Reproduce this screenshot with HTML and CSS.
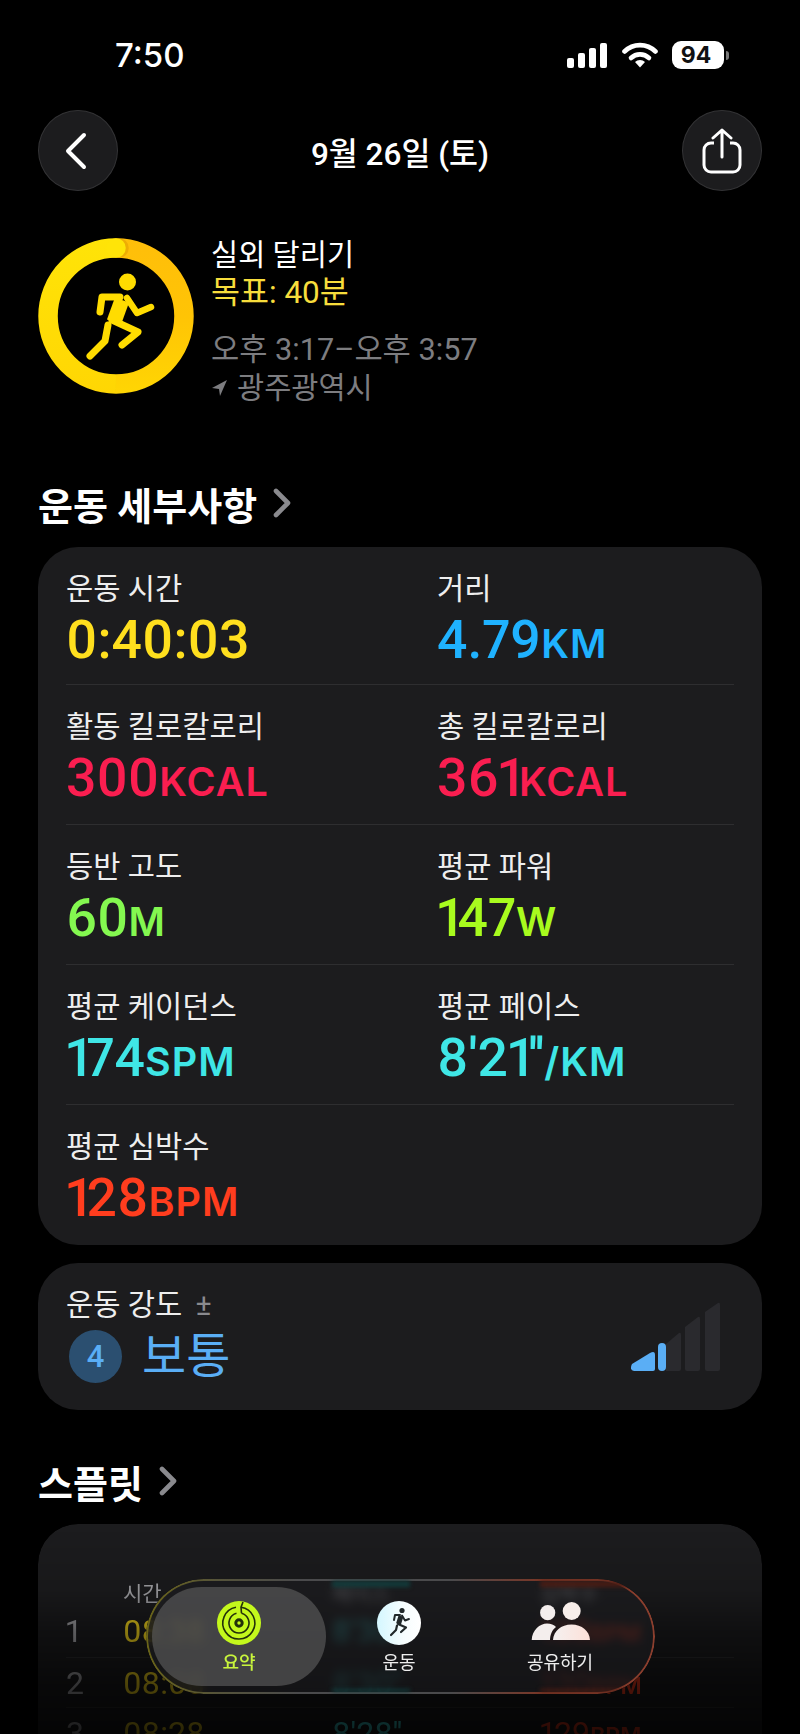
FILE: index.html
```html
<!DOCTYPE html>
<html lang="ko">
<head>
    <meta charset="UTF-8">
    <meta name="viewport" content="width=device-width, initial-scale=1.0">
    <title>운동 요약</title>
    <link rel="stylesheet" href="styles.css">
</head>
<body>
<div class="page">
    <div class="status-bar">
        <span class="clock">7:50</span>
        <div class="status-icons">
            <svg class="signal" width="40" height="25" viewBox="0 0 40 25">
                <rect x="0" y="15" width="7" height="10" rx="2"/>
                <rect x="11" y="10" width="7" height="15" rx="2"/>
                <rect x="22" y="5" width="7" height="20" rx="2"/>
                <rect x="33" y="0" width="7" height="25" rx="2"/>
            </svg>
            <svg class="wifi" width="36" height="26" viewBox="0 0 36 26">
                <path d="M2.5 9.5 A22 22 0 0 1 33.5 9.5" fill="none" stroke="#fff" stroke-width="4.6" stroke-linecap="round"/>
                <path d="M9 16 A13 13 0 0 1 27 16" fill="none" stroke="#fff" stroke-width="4.6" stroke-linecap="round"/>
                <path d="M13 20 A7 7 0 0 1 23 20 L18 25.5 Z" fill="#fff"/>
            </svg>
            <div class="battery"><span>94</span></div>
            <div class="battery-nub"></div>
        </div>
    </div>

    <div class="nav">
        <button class="round-btn">
            <svg class="back-icon" width="24" height="38" viewBox="0 0 24 38"><path d="M20 3 L4 19 L20 35" fill="none" stroke="#fff" stroke-width="4" stroke-linecap="round" stroke-linejoin="round"/></svg>
        </button>
        <h1 class="nav-title">9월 26일 (토)</h1>
        <button class="round-btn">
            <svg width="40" height="46" viewBox="0 0 40 46">
                <path d="M12 15 H9 A7 7 0 0 0 2 22 V37 A7 7 0 0 0 9 44 H31 A7 7 0 0 0 38 37 V22 A7 7 0 0 0 31 15 H28" fill="none" stroke="#fff" stroke-width="3"/>
                <path d="M20 29 V2 M11 10 L20 2 L29 10" fill="none" stroke="#fff" stroke-width="3" stroke-linecap="round" stroke-linejoin="round"/>
            </svg>
        </button>
    </div>

    <div class="hero">
        <svg class="ring" width="160" height="160" viewBox="0 0 160 160">
            <defs>
                <linearGradient id="ringRight" gradientUnits="userSpaceOnUse" x1="80" y1="0" x2="80" y2="160">
                    <stop offset="0" stop-color="#ffbe0a"/>
                    <stop offset="0.5" stop-color="#ffc405"/>
                    <stop offset="1" stop-color="#ffd603"/>
                </linearGradient>
                <linearGradient id="ringLeft" gradientUnits="userSpaceOnUse" x1="80" y1="0" x2="80" y2="160">
                    <stop offset="0" stop-color="#ffe408"/>
                    <stop offset="1" stop-color="#ffd603"/>
                </linearGradient>
            </defs>
            <path d="M80 12 A68 68 0 0 1 80 148" fill="none" stroke="url(#ringRight)" stroke-width="19.5"/>
            <path d="M80 148 A68 68 0 0 1 80 12" fill="none" stroke="url(#ringLeft)" stroke-width="19.5"/>
            <circle cx="83" cy="12" r="9.75" fill="#dd9c00" opacity="0.5"/>
            <circle cx="80" cy="12" r="9.75" fill="#ffe408"/>
            <g fill="none" stroke="#ffdc00" stroke-linecap="round" stroke-linejoin="round">
                <circle cx="91.5" cy="46" r="8.5" fill="#ffdc00" stroke="none"/>
                <path d="M86 64 L78 86" stroke-width="15" stroke-linecap="butt"/>
                <path d="M84 61 H66 L64 76" stroke-width="7"/>
                <path d="M91 62 L101 77 L115 71" stroke-width="6.5"/>
                <path d="M72 89 L69 105 L54 120" stroke-width="7"/>
                <path d="M76 84 L102 96 L86 109" stroke-width="7"/>
            </g>
        </svg>
        <div class="hero-text">
            <div class="hero-name">실외 달리기</div>
            <div class="hero-goal">목표: 40분</div>
            <div class="hero-time">오후 3:17–오후 3:57</div>
            <div class="hero-place">
                <svg width="15" height="16" viewBox="0 0 15 16"><path d="M15 0 L0 8 L7 9 L8 16 Z" fill="#7d7d80"/></svg>
                광주광역시
            </div>
        </div>
    </div>

    <h2 class="section-title first">운동 세부사항
        <svg width="18" height="30" viewBox="0 0 18 30"><path d="M3 3 L15 15 L3 27" fill="none" stroke="#8a8a8e" stroke-width="4.6" stroke-linecap="round" stroke-linejoin="round"/></svg>
    </h2>
    <div class="card stats">
        <div class="stat-row">
            <div class="stat"><div class="stat-label">운동 시간</div><div class="stat-value yellow">0:40:03</div></div>
            <div class="stat"><div class="stat-label">거리</div><div class="stat-value blue">4.79<small>KM</small></div></div>
        </div>
        <div class="stat-row">
            <div class="stat"><div class="stat-label">활동 킬로칼로리</div><div class="stat-value pink">300<small>KCAL</small></div></div>
            <div class="stat"><div class="stat-label">총 킬로칼로리</div><div class="stat-value pink">36<span class="one">1</span><small>KCAL</small></div></div>
        </div>
        <div class="stat-row">
            <div class="stat"><div class="stat-label">등반 고도</div><div class="stat-value green">60<small>M</small></div></div>
            <div class="stat"><div class="stat-label">평균 파워</div><div class="stat-value lime"><span class="one">1</span>47<small>W</small></div></div>
        </div>
        <div class="stat-row">
            <div class="stat"><div class="stat-label">평균 케이던스</div><div class="stat-value cyan"><span class="one">1</span>74<small>SPM</small></div></div>
            <div class="stat"><div class="stat-label">평균 페이스</div><div class="stat-value cyan">8'2<span class="one">1</span>''<small>/KM</small></div></div>
        </div>
        <div class="stat-row">
            <div class="stat"><div class="stat-label">평균 심박수</div><div class="stat-value red"><span class="one">1</span>28<small>BPM</small></div></div>
        </div>
    </div>

    <div class="card effort">
        <div>
            <div class="stat-label">운동 강도 <span class="plus-minus">±</span></div>
            <div class="effort-level">
                <span class="effort-badge">4</span>
                <span class="effort-name">보통</span>
            </div>
        </div>
        <svg class="effort-bars" width="90" height="70" viewBox="0 0 90 70">
            <path d="M74 10 L87 1 Q89 0 89 3 V67 Q89 69 87 69 H76 Q74 69 74 67 Z" fill="#2a2a2e"/>
            <path d="M54 25 L67 15 Q69 14 69 17 V67 Q69 69 67 69 H56 Q54 69 54 67 Z" fill="#2a2a2e"/>
            <path d="M35 42 L48 31 Q50 30 50 33 V67 Q50 69 48 69 H35 Z" fill="#2a2a2e"/>
            <rect x="27" y="41" width="8" height="28" rx="4" fill="#5aaef5"/>
            <path d="M1 62 L19 51 Q24 48 24 53 V67 Q24 69 22 69 H3 Q-2 68 1 62 Z" fill="#5aaef5"/>
        </svg>
    </div>

    <h2 class="section-title">스플릿
        <svg width="18" height="30" viewBox="0 0 18 30"><path d="M3 3 L15 15 L3 27" fill="none" stroke="#8a8a8e" stroke-width="4.6" stroke-linecap="round" stroke-linejoin="round"/></svg>
    </h2>
    <div class="card splits">
        <div class="split-row split-head">
            <span></span><span>시간</span><span>페이스</span><span>심박수</span>
        </div>
        <div class="split-row">
            <span class="split-num">1</span><span class="yellow">08:38</span><span class="cyan">8'30''</span><span class="red">133<small>BPM</small></span>
        </div>
        <div class="split-row">
            <span class="split-num">2</span><span class="yellow">08:08</span><span class="cyan">8'30''</span><span class="red">130<small>BPM</small></span>
        </div>
        <div class="split-row">
            <span class="split-num">3</span><span class="yellow">08:28</span><span class="cyan">8'28''</span><span class="red">129<small>BPM</small></span>
        </div>
    </div>

    <div class="tab-bar">
        <div class="glint glint-teal"></div>
        <div class="glint glint-red"></div>
        <div class="tab active">
            <svg width="44" height="44" viewBox="0 0 44 44">
                <circle cx="22" cy="22" r="22" fill="#c4f81c"/>
                <g fill="none" stroke="#23300a" stroke-width="1.6">
                    <path d="M24 6.2 A16 16 0 1 1 19 6.3"/>
                    <path d="M24.5 12.3 A10 10 0 1 1 19.5 12.3"/>
                    <circle cx="22" cy="22" r="3.2" stroke-width="3"/>
                    <path d="M26 1 L24 6.2 L24.5 12.3"/>
                </g>
            </svg>
            <span>요약</span>
        </div>
        <div class="tab">
            <svg width="44" height="44" viewBox="0 0 44 44">
                <defs>
                    <linearGradient id="iconGrad" x1="0" y1="0" x2="1" y2="0">
                        <stop offset="0" stop-color="#d4f7ff"/>
                        <stop offset="0.6" stop-color="#f6fdfe"/>
                        <stop offset="1" stop-color="#fff"/>
                    </linearGradient>
                </defs>
                <circle cx="22" cy="22" r="22" fill="url(#iconGrad)"/>
                <g fill="none" stroke="#20282a" stroke-linecap="round" stroke-linejoin="round">
                    <circle cx="25" cy="9.5" r="2.6" fill="#20282a" stroke="none"/>
                    <path d="M24 15 L21.5 23" stroke-width="5" stroke-linecap="butt"/>
                    <path d="M23 14 H18 L17 19" stroke-width="2"/>
                    <path d="M25 14.5 L28 19.5 L32 18" stroke-width="1.9"/>
                    <path d="M20 24.5 L19 29 L14 34" stroke-width="2.2"/>
                    <path d="M21 23 L29 26.5 L24 31" stroke-width="2.2"/>
                </g>
            </svg>
            <span>운동</span>
        </div>
        <div class="tab">
            <svg width="60" height="44" viewBox="0 0 60 44">
                <defs>
                    <linearGradient id="peopleGrad" x1="0" y1="0" x2="1" y2="0">
                        <stop offset="0" stop-color="#f5f1f0"/>
                        <stop offset="1" stop-color="#fde0d8"/>
                    </linearGradient>
                </defs>
                <circle cx="17.7" cy="11.7" r="7.6" fill="#f4eeed"/>
                <circle cx="41.7" cy="10" r="9" fill="#f8eeea"/>
                <path d="M1.7 39 C2 29 10 22.5 17 22.5 C21 22.5 24 24 26 26 C22 29 20 34 20 39 Z" fill="#f4eeed"/>
                <path d="M23 39 C23.5 30 31 23.5 41.5 23.5 C52 23.5 59.5 30 60 39 Z" fill="url(#peopleGrad)"/>
            </svg>
            <span>공유하기</span>
        </div>
    </div>
</div>
</body>
</html>
```

FILE: styles.css
```css
* {
    box-sizing: border-box;
}

body {
    margin: 0;
    background-color: #000;
    color: #fff;
    font-family: Roboto, "Noto Sans CJK KR", sans-serif;
}

.page {
    position: relative;
    width: 800px;
    height: 1734px;
    padding: 0 38px;
    overflow: hidden;
    background-color: #000;
}

.status-bar {
    display: flex;
    justify-content: space-between;
    align-items: center;
    height: 110px;
    padding: 0 33px 0 77px;
}

.clock {
    font-family: Inter, sans-serif;
    font-size: 33px;
    font-weight: 500;
}

.status-icons {
    display: flex;
    align-items: center;
}

.signal {
    fill: #fff;
    margin-right: 15px;
}

.wifi {
    margin-right: 14px;
}

.battery {
    width: 52px;
    height: 28px;
    border-radius: 9px;
    background-color: #fff;
    color: #111;
    font-family: Inter, sans-serif;
    font-size: 23px;
    font-weight: 700;
    line-height: 28px;
    text-align: center;
    padding-right: 4px;
}

.battery-nub {
    width: 3px;
    height: 9px;
    margin-left: 2px;
    border-radius: 0 3px 3px 0;
    background-color: #777;
}

.nav {
    display: flex;
    justify-content: space-between;
    align-items: center;
    height: 81px;
}

.round-btn {
    display: flex;
    justify-content: center;
    align-items: center;
    width: 80px;
    height: 81px;
    padding: 0;
    border: 1px solid #333335;
    border-radius: 50%;
    background-color: #1c1c1e;
}

.back-icon {
    margin-right: 4px;
}

.nav-title {
    margin: 0;
    font-size: 31.5px;
    font-weight: 500;
}

.hero {
    display: flex;
    margin-top: 45px;
    height: 171px;
}

.ring {
    margin: 0 15px 0 -2px;
}

.hero-text {
    font-size: 29.5px;
    line-height: 38px;
}

.hero-goal {
    color: #f7dd3c;
    font-size: 31.5px;
}

.hero-time {
    margin-top: 19px;
    color: #7d7d80;
    font-size: 30.7px;
}

.hero-place {
    display: flex;
    align-items: center;
    gap: 10px;
    color: #7d7d80;
}

.hero-place svg {
    margin-left: 1px;
}

.section-title {
    display: flex;
    align-items: center;
    gap: 16px;
    height: 44px;
    margin: 49px 0 21px;
    font-size: 38px;
    font-weight: 700;
    white-space: nowrap;
}

.section-title.first {
    margin: 74px 0 22px;
}

.card {
    border-radius: 40px;
    background-color: #1c1c1e;
}

.stats {
    padding: 0 28px;
    height: 698px;
}

.stat-row {
    display: grid;
    grid-template-columns: 371px 1fr;
    height: 140px;
    padding-top: 25px;
    border-bottom: 1px solid #2e2e30;
}

.stat-row:first-child {
    height: 138px;
}

.stat-row:last-child {
    border-bottom: none;
}

.stat-label {
    font-size: 29.6px;
    line-height: 34px;
    color: #eee;
    white-space: nowrap;
}

.stat-value {
    margin-top: 4px;
    font-size: 53.5px;
    font-weight: 500;
    line-height: 60px;
    white-space: nowrap;
    font-feature-settings: "pnum";
}

.stat-value small {
    font-family: Inter, sans-serif;
    font-size: 39.5px;
    font-weight: 600;
    letter-spacing: 1px;
}

/* the digit 1 sits tighter than the others in this type */
.one {
    margin-right: -4px;
}

.yellow { color: #ffdf1e; }
.blue { color: #1fb2ff; }
.pink { color: #fa1e50; }
.green { color: #84f850; }
.lime { color: #a8fb1e; }
.cyan { color: #3fe6e6; }
.red { color: #ff3d1e; }

.effort {
    display: flex;
    justify-content: space-between;
    align-items: flex-start;
    height: 147px;
    margin-top: 18px;
    padding: 25px 41px 0 28px;
}

.plus-minus {
    margin-left: 6px;
    font-size: 30px;
    color: #8a8a8e;
}

.effort-level {
    display: flex;
    align-items: center;
    gap: 20px;
    margin-top: 8px;
    padding-left: 3px;
}

.effort-badge {
    display: flex;
    justify-content: center;
    align-items: center;
    width: 53px;
    height: 53px;
    border-radius: 50%;
    background-color: #2b4f70;
    color: #5aaef5;
    font-size: 31px;
    font-weight: 500;
}

.effort-name {
    font-size: 48px;
    font-weight: 400;
    line-height: 53px;
    color: #5aaef5;
}

.effort-bars {
    margin-top: 14px;
}

.splits {
    height: 320px;
    padding: 53px 28px 0;
    -webkit-mask-image: linear-gradient(#000, rgba(0, 0, 0, 0.85) 67px, rgba(0, 0, 0, 0.55) 107px, rgba(0, 0, 0, 0.3) 160px, rgba(0, 0, 0, 0.16) 210px);
    mask-image: linear-gradient(#000, rgba(0, 0, 0, 0.85) 67px, rgba(0, 0, 0, 0.55) 107px, rgba(0, 0, 0, 0.3) 160px, rgba(0, 0, 0, 0.16) 210px);
}

.split-row {
    display: grid;
    grid-template-columns: 57px 209px 208px 1fr;
    align-items: center;
    height: 50px;
    border-bottom: 1px solid #2e2e30;
    font-size: 32px;
    white-space: nowrap;
    font-feature-settings: "pnum";
}

.split-row small {
    font-family: Inter, sans-serif;
    font-size: 23px;
    font-weight: 600;
}

.split-head {
    height: 28px;
    border-bottom: none;
    font-size: 21px;
    color: #a8a8ac;
}

.split-head + .split-row {
    height: 53px;
}

.split-num {
    color: #a8a8ac;
}

.tab-bar {
    position: absolute;
    left: 146px;
    bottom: 40px;
    display: grid;
    grid-template-columns: 174px 146px 176px;
    width: 509px;
    height: 115px;
    padding: 8px 6px;
    border-radius: 58px;
    overflow: hidden;
    background-color: rgba(29, 29, 31, 0.6);
    -webkit-backdrop-filter: blur(5px);
    backdrop-filter: blur(5px);
}

.tab-bar::before {
    content: "";
    position: absolute;
    inset: 0;
    padding: 2px;
    border-radius: inherit;
    background: linear-gradient(90deg, #6a6418, #55533a 14%, #4a4a4c 30%, #4a4a4c 60%, #7a3626 78%, #8c3f2e);
    -webkit-mask: linear-gradient(#000 0 0) content-box, linear-gradient(#000 0 0);
    -webkit-mask-composite: xor;
    mask-composite: exclude;
}

/* row values bent into the top and bottom of the glass */
.glint {
    position: absolute;
    top: 2px;
    height: 111px;
    border-top: 6px solid;
    border-bottom: 3px solid;
    filter: blur(2px);
}

.glint-teal {
    left: 186px;
    width: 78px;
    border-color: #123c3c;
}

.glint-red {
    left: 394px;
    width: 100px;
    border-color: #4a1c14;
}

.tab {
    position: relative;
    display: flex;
    flex-direction: column;
    align-items: center;
    padding-top: 14px;
    gap: 3px;
    border-radius: 50px;
    font-size: 18px;
    line-height: 30px;
    color: #eee;
}

.tab svg {
    flex: none;
}

.tab.active {
    background-color: rgba(90, 90, 90, 0.68);
    color: #c8f53c;
    font-weight: 500;
}
```
